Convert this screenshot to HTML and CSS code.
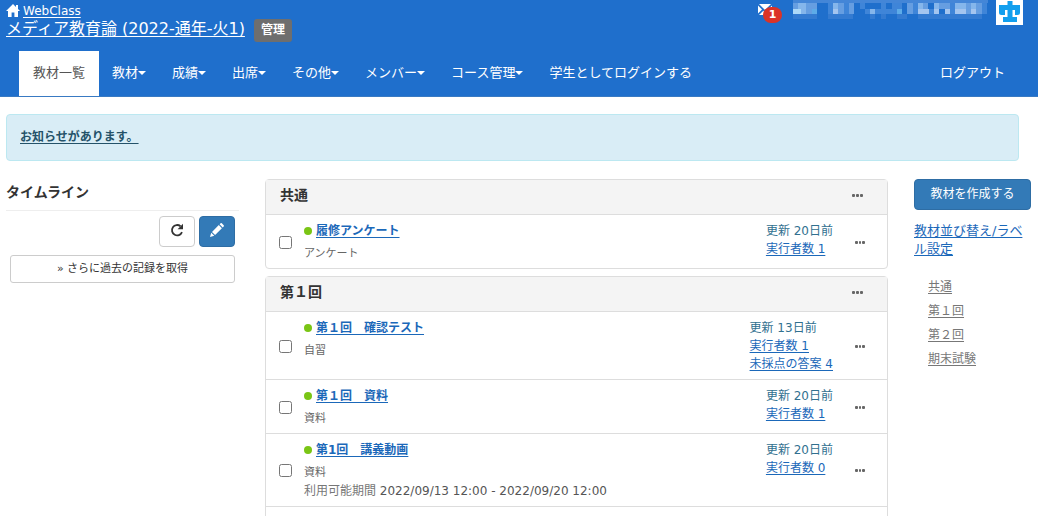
FILE: index.html
```html
<!DOCTYPE html>
<html lang="ja">
<head>
<meta charset="utf-8">
<title>メディア教育論 - WebClass</title>
<link rel="stylesheet" href="styles.css">
</head>
<body>
<header class="header">
  <div class="topbar">
    <div class="brand">
      <a class="home" href="#"><svg class="home-icon" viewBox="0 0 14 13" aria-hidden="true"><path fill="#fff" d="M7 0 0 7h2v6h3.600V8.500h2.800V13H12V7h2L12 5V1H10v2z"/></svg> WebClass</a>
      <div class="course"><a class="course-name" href="#">メディア教育論 (2022-通年-火1)</a><span class="role">管理</span></div>
    </div>
    <div class="account">
      <a class="mail" href="#" aria-label="メッセージ 1件"><svg class="mail-icon" viewBox="0 0 14 11" aria-hidden="true"><path fill="#fff" d="M1 0h12L7 6zM0 1.500 4 5.500 0 9.500zM14 1.500V11H1l4.300-4.300L7 8.200l3.500-3.500z"/></svg><span class="badge">1</span></a>
      <svg class="user-name" viewBox="0 0 195 20" shape-rendering="crispEdges" aria-hidden="true">
        <path fill="#4486d7" d="M0 0h195v3H0z"/>
        <path fill="#347bd1" d="M0 14h24v5H0zM35 14h25v5H35zM77 14h5v5h-5zM88 14h5v5h-5zM104 14h10v5h-10zM125 14h64v5h-64z"/>
        <path fill="#3f85d8" d="M35 3h5v11h-5zM51 3h5v11h-5zM67 3h5v6h-5zM72 9h5v5h-5zM82 9h22v5H82zM88 3h5v6h-5zM99 3h10v6H99zM93 9h6v5h-6zM120 3h5v11h-5zM136 9h5v5h-5zM157 3h5v11h-5zM189 3h5v11h-5z"/>
        <path fill="#669ee1" d="M0 3h5v6H0zM13 3h11v6H13zM13 9h6v5h-6zM45 3h6v11h-6zM56 3h5v11h-5zM114 3h6v6h-6zM114 9h6v5h-6zM130 3h5v6h-5zM146 3h11v6h-11zM173 3h5v11h-5zM183 3h6v11h-6z"/>
        <path fill="#5dabe8" d="M19 9h5v5h-5zM104 9h5v5h-5z"/>
        <path fill="#85b6eb" d="M5 3h8v11H5zM40 3h5v6h-5zM77 9h5v5h-5zM125 3h5v6h-5zM141 3h5v6h-5zM162 3h11v6h-11zM178 3h5v6h-5z"/>
        <path fill="#a4c5ef" d="M40 9h5v5h-5zM125 9h11v5h-11zM141 9h5v5h-5zM152 9h5v5h-5zM162 9h11v5h-11zM178 9h5v5h-5z"/>
        <path fill="#acd8f8" d="M0 9h8v5H0z"/>
      </svg>
      <a class="site-logo" href="#" aria-label="大学ホーム"><svg viewBox="0 0 27 25"><path fill="#129fee" d="M11.500 1h5v4H24v7.500q0 2.500-2.500 2.500H19v-5h-2.500v7H21v5H7v-5h4.500v-7H9v5H5.500Q3 15 3 12.500V5h8.500z"/></svg></a>
    </div>
  </div>
  <nav class="nav">
    <a class="tab active" href="#">教材一覧</a>
    <a class="tab" href="#">教材<i class="caret"></i></a>
    <a class="tab" href="#">成績<i class="caret"></i></a>
    <a class="tab" href="#">出席<i class="caret"></i></a>
    <a class="tab" href="#">その他<i class="caret"></i></a>
    <a class="tab" href="#">メンバー<i class="caret"></i></a>
    <a class="tab" href="#">コース管理<i class="caret"></i></a>
    <a class="tab" href="#">学生としてログインする</a>
    <a class="tab logout" href="#">ログアウト</a>
  </nav>
</header>
<div class="notice"><a href="#">お知らせがあります。</a></div>
<div class="columns">
  <aside class="timeline">
    <h2>タイムライン</h2>
    <div class="tools">
      <button class="btn" type="button" aria-label="更新"><svg viewBox="0 0 14 14"><path fill="none" stroke="#333" stroke-width="1.800" d="M12 9.200A5.200 5.200 0 1 1 10.500 3.200"/><path fill="#333" d="M13 .8v5.400H7.600z"/></svg></button>
      <button class="btn primary" type="button" aria-label="編集"><svg viewBox="0 0 14 14"><path fill="#fff" d="M0 14 1.200 9.700 4.300 12.800zM2 8.900 8.800 2.100 11.900 5.200 5.100 12zM9.600 1.300 10.600.3Q11.200-.2 11.800.3L13.700 2.200Q14.200 2.800 13.700 3.400L12.700 4.400z"/></svg></button>
    </div>
    <button class="more" type="button">» さらに過去の記録を取得</button>
  </aside>
  <main class="contents">
    <section class="panel">
      <div class="panel-head"><h3>共通</h3><button class="dots" type="button" aria-label="メニュー"><i></i><i></i><i></i></button></div>
      <ul>
        <li class="item">
          <input type="checkbox" aria-label="履修アンケート">
          <div class="info"><a class="name" href="#">履修アンケート</a><p class="kind">アンケート</p></div>
          <div class="status"><span>更新 20日前</span><a href="#">実行者数 1</a></div>
          <button class="dots" type="button" aria-label="メニュー"><i></i><i></i><i></i></button>
        </li>
      </ul>
    </section>
    <section class="panel">
      <div class="panel-head"><h3>第１回</h3><button class="dots" type="button" aria-label="メニュー"><i></i><i></i><i></i></button></div>
      <ul>
        <li class="item">
          <input type="checkbox" aria-label="第１回　確認テスト">
          <div class="info"><a class="name" href="#">第１回　確認テスト</a><p class="kind">自習</p></div>
          <div class="status"><span>更新 13日前</span><a href="#">実行者数 1</a><a href="#">未採点の答案 4</a></div>
          <button class="dots" type="button" aria-label="メニュー"><i></i><i></i><i></i></button>
        </li>
        <li class="item">
          <input type="checkbox" aria-label="第１回　資料">
          <div class="info"><a class="name" href="#">第１回　資料</a><p class="kind">資料</p></div>
          <div class="status"><span>更新 20日前</span><a href="#">実行者数 1</a></div>
          <button class="dots" type="button" aria-label="メニュー"><i></i><i></i><i></i></button>
        </li>
        <li class="item">
          <input type="checkbox" aria-label="第1回　講義動画">
          <div class="info"><a class="name" href="#">第1回　講義動画</a><p class="kind">資料</p><p class="period">利用可能期間 <span>2022/09/13 12:00 - 2022/09/20 12:00</span></p></div>
          <div class="status"><span>更新 20日前</span><a href="#">実行者数 0</a></div>
          <button class="dots" type="button" aria-label="メニュー"><i></i><i></i><i></i></button>
        </li>
        <li class="item"></li>
      </ul>
    </section>
  </main>
  <aside class="side">
    <button class="create" type="button">教材を作成する</button>
    <a class="sort" href="#">教材並び替え/ラベル設定</a>
    <ul class="toc">
      <li><a href="#">共通</a></li>
      <li><a href="#">第１回</a></li>
      <li><a href="#">第２回</a></li>
      <li><a href="#">期末試験</a></li>
    </ul>
  </aside>
</div>
</body>
</html>
```
FILE: styles.css
```css
* { box-sizing: border-box; }
html { scrollbar-width: none; }
body {
  margin: 0;
  background: #fff;
  color: #333;
  font: 12px/18px "DejaVu Sans", "Noto Sans CJK JP", sans-serif;
}
button { font: inherit; cursor: pointer; }
h2, h3, p, ul { margin: 0; padding: 0; }
ul { list-style: none; }
a { color: #1b68b9; text-underline-offset: 2px; }
svg { display: block; }

.header { background: #1f6fcc; border-bottom: 1px solid #397ac3; }
.header a { color: #fff; }
.topbar { display: flex; justify-content: space-between; padding: 0 15px 0 6px; }
.home { display: flex; gap: 3px; align-items: center; height: 19px; padding-top: 2px; }
.home-icon { width: 14px; height: 13px; }
.course { display: flex; gap: 9px; font-size: 16px; line-height: 20px; }
.role {
  padding: 2px 7px 3px;
  border-radius: 3px;
  background: #6e6e6e;
  color: #fff;
  font-size: 12px;
  font-weight: bold;
  line-height: 18px;
}
.account { display: flex; }
.mail { position: relative; width: 35px; padding-top: 4px; }
.mail-icon { width: 14px; height: 11px; }
.badge {
  position: absolute;
  left: 5px;
  top: 7px;
  width: 19px;
  border-radius: 8px;
  background: #db3327;
  font-size: 11px;
  font-weight: bold;
  line-height: 16px;
  text-align: center;
}
.user-name { width: 195px; height: 20px; margin-right: 8px; }
.site-logo { width: 27px; height: 25px; background: #fff; }

.nav { display: flex; padding: 9px 20px 0 19px; }
.tab {
  display: flex;
  align-items: center;
  height: 45px;
  padding: 0 13px 2px;
  font-size: 13px;
  text-decoration: none;
}
.header .active { padding: 0 14px 2px; background: #fff; color: #555; }
.logout { margin-left: auto; }
.caret { border: 4px solid transparent; border-top-color: #fff; border-bottom: 0; }

.notice {
  margin: 17px 19px 0 6px;
  padding: 13px 13px 14px;
  border: 1px solid #bce8f1;
  border-radius: 4px;
  background: #d9edf6;
  font-weight: bold;
}
.notice a { color: #245269; }

.columns {
  display: grid;
  grid-template-columns: 233fr 623fr 117fr;
  gap: 26px;
  padding: 18px 7px 0 6px;
}
.timeline h2 {
  padding: 4px 0 9px;
  border-bottom: 1px solid #eee;
  font-size: 14px;
  line-height: 18px;
}
.tools { display: flex; justify-content: flex-end; gap: 4px; padding: 5px 4px 0; }
.btn {
  display: grid;
  place-items: center;
  width: 36px;
  height: 31px;
  padding: 0 0 3px;
  border: 1px solid #ccc;
  border-radius: 4px;
  background: #fff;
}
.btn svg { width: 14px; height: 14px; }
.primary { border-color: #2e6da4; background: #337ab7; }
.more {
  display: block;
  width: calc(100% - 8px);
  margin: 8px 4px 0;
  padding: 4px 5px;
  border: 1px solid #ccc;
  border-radius: 3px;
  background: #fff;
  color: #333;
  font-size: 11px;
}

.panel { margin-bottom: 7px; border: 1px solid #ddd; border-radius: 4px; }
.panel-head {
  display: flex;
  justify-content: space-between;
  align-items: center;
  padding: 6px 24px 10px 14px;
  background: #f4f4f4;
}
.panel-head h3 { font-size: 14px; line-height: 18px; }
.dots { display: flex; gap: 1px; padding: 0; border: 0; background: none; }
.dots i { width: 3px; height: 3px; border-radius: 1px; background: #666; }
.item {
  display: grid;
  grid-template-columns: 13px 1fr auto 10px;
  align-items: center;
  min-height: 54px;
  padding: 7px 22px 6px 13px;
  border-top: 1px solid #ddd;
}
.item input { width: 13px; height: 13px; margin: 0; }
.info { align-self: start; padding-left: 12px; }
.info::before {
  content: "";
  display: inline-block;
  width: 8px;
  height: 8px;
  margin-right: 4px;
  border-radius: 50%;
  background: #7ac515;
}
.name { font-weight: bold; }
.kind { padding-top: 5px; color: #666; font-size: 11px; line-height: 17px; }
.period { padding-top: 1px; color: #777; }
.period span { color: #555; }
.status { display: grid; align-self: start; padding-right: 22px; color: #31708f; }
.status a { justify-self: start; }

.create {
  width: 100%;
  padding: 5px 0 6px;
  border: 1px solid #2e6da4;
  border-radius: 4px;
  background: #337ab7;
  color: #fff;
}
.sort { display: block; margin-top: 12px; padding-right: 6px; font-size: 13px; }
.toc { display: grid; gap: 6px; padding: 20px 0 0 14px; }
.toc a { color: #777; }
```
